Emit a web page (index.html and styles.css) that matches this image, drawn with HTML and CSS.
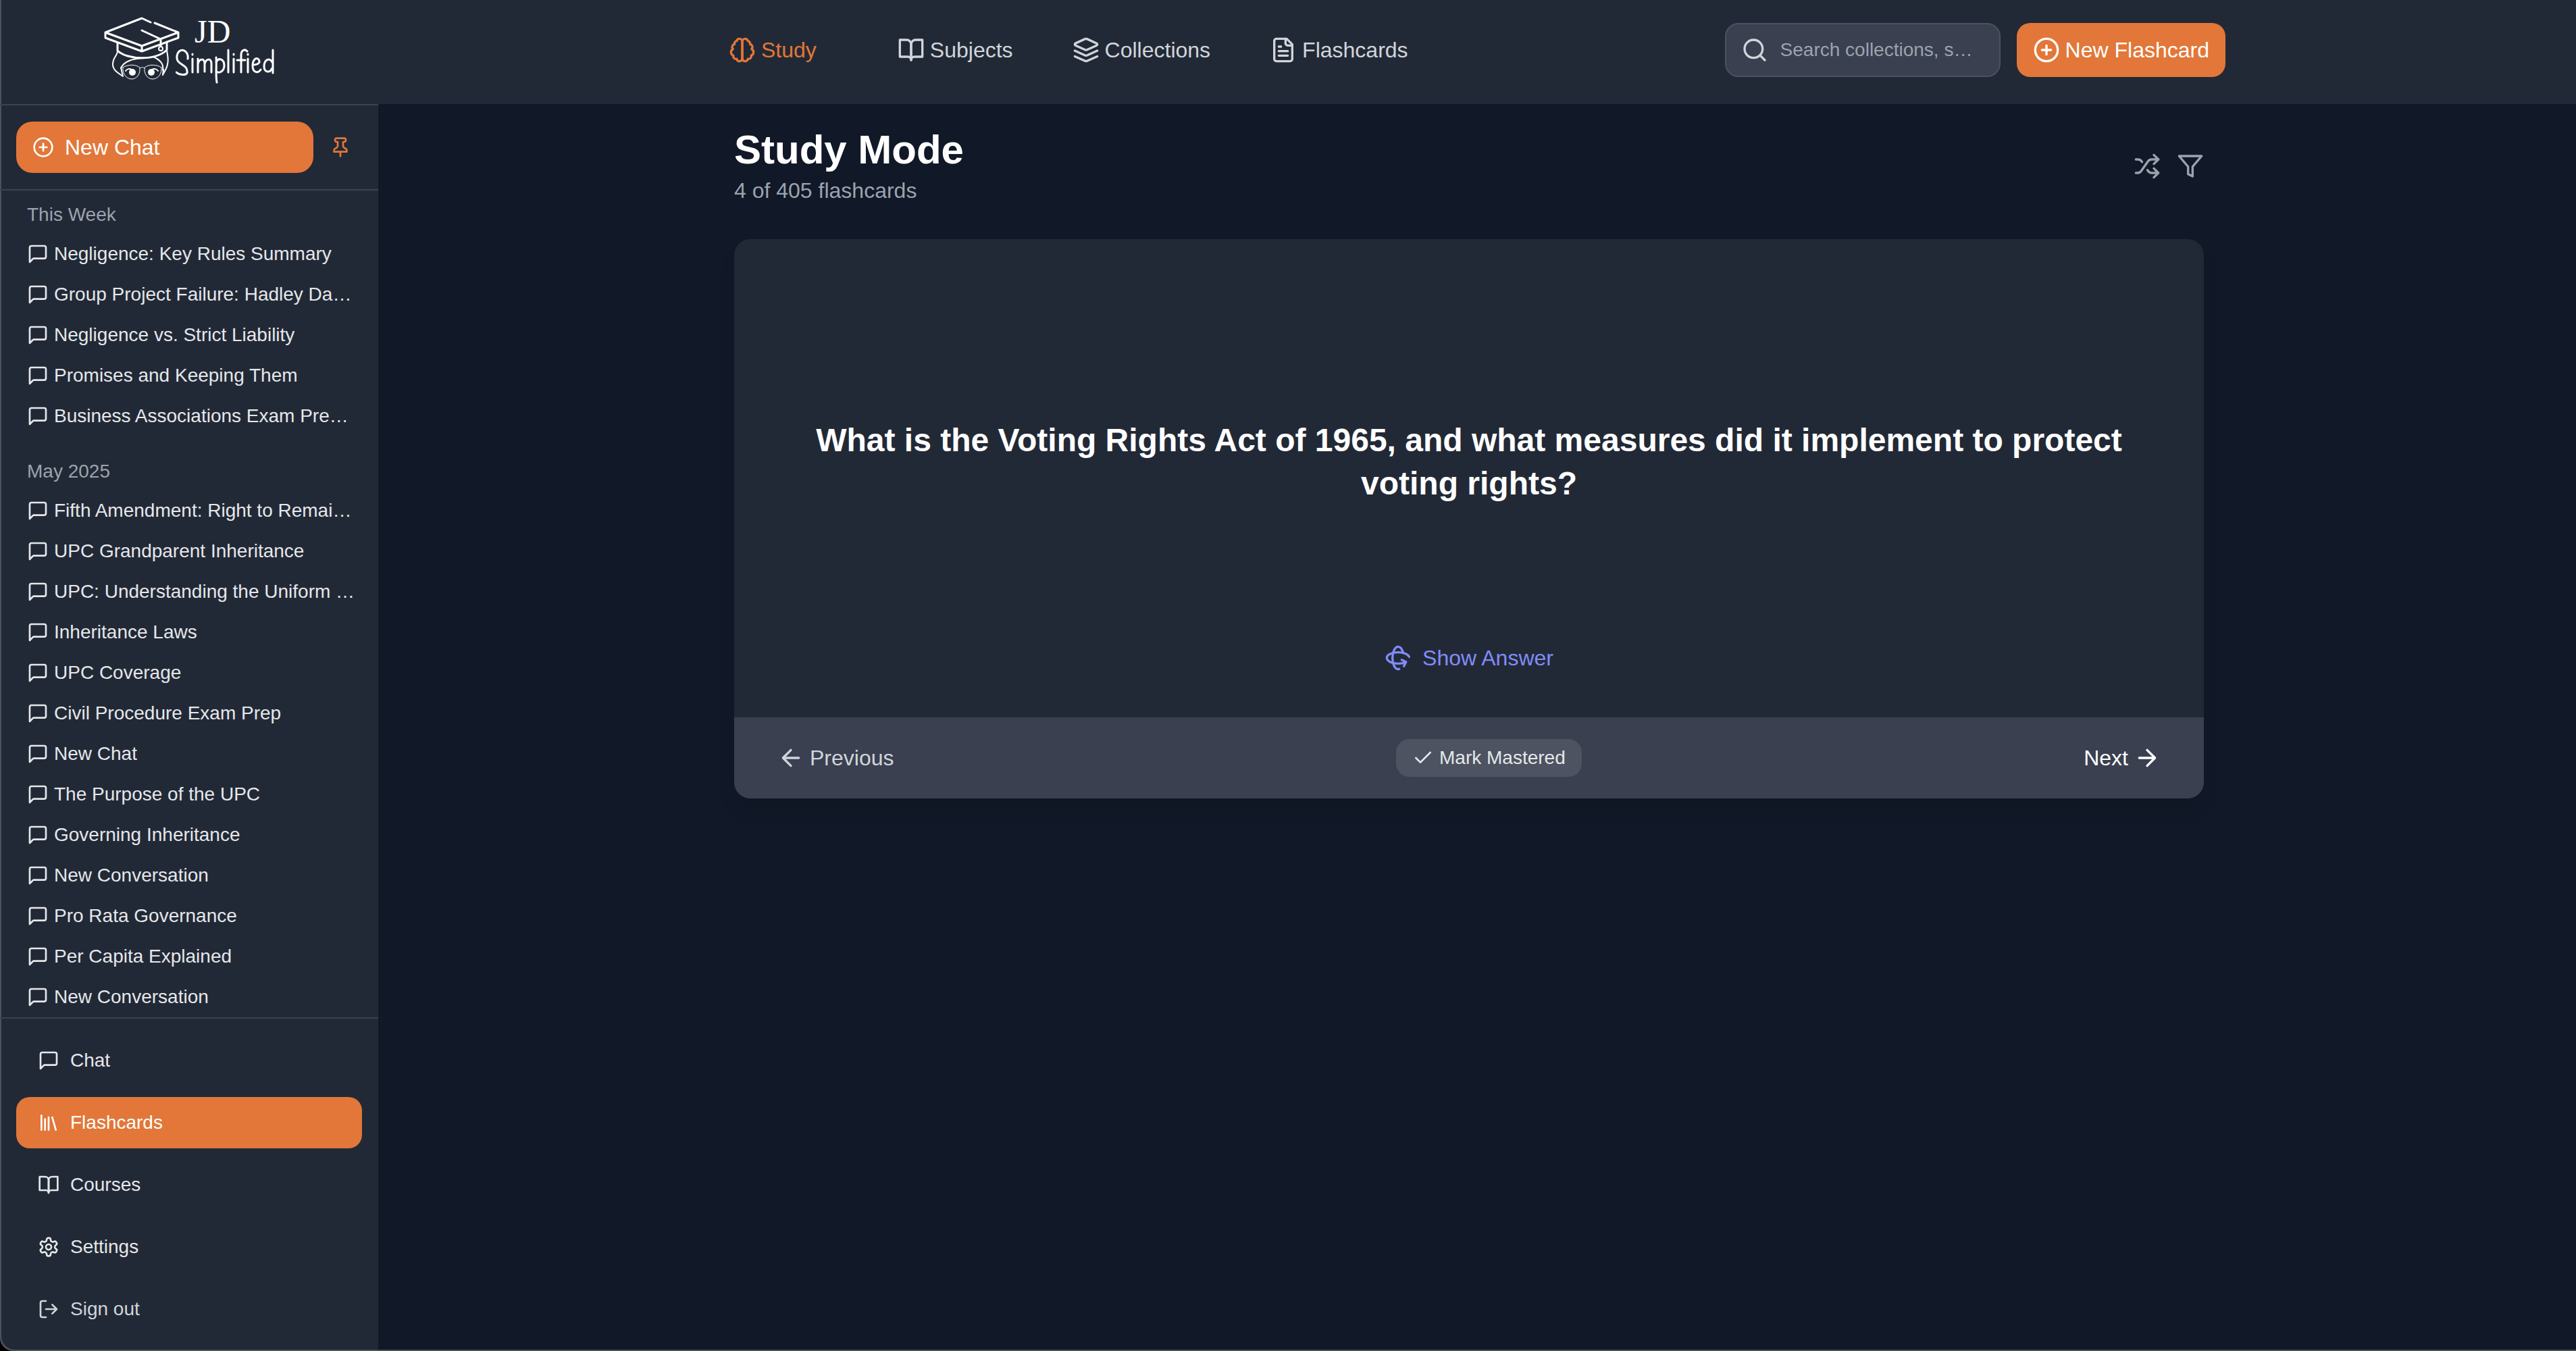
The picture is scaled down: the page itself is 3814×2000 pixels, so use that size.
FILE: index.html
```html
<!DOCTYPE html>
<html lang="en">
<head>
<meta charset="utf-8">
<title>JD Simplified – Study Mode</title>
<link rel="stylesheet" href="styles.css">
</head>
<body>
<svg class="sprite" aria-hidden="true">
  <symbol id="i-plus" viewBox="0 0 24 24"><circle cx="12" cy="12" r="10"/><path d="M8 12h8M12 8v8"/></symbol>
  <symbol id="i-pin" viewBox="0 0 24 24"><path d="M12 17v5"/><path d="M5 17h14v-1.76a2 2 0 0 0-1.11-1.79l-1.78-.9A2 2 0 0 1 15 10.76V6h1a2 2 0 0 0 0-4H8a2 2 0 0 0 0 4h1v4.76a2 2 0 0 1-1.11 1.79l-1.78.9A2 2 0 0 0 5 15.24Z"/></symbol>
  <symbol id="i-msg" viewBox="0 0 24 24"><path d="M21 15a2 2 0 0 1-2 2H7l-4 4V5a2 2 0 0 1 2-2h14a2 2 0 0 1 2 2z"/></symbol>
  <symbol id="i-library" viewBox="0 0 24 24"><path d="m16 6 4 14M12 6v14M8 8v12M4 4v16"/></symbol>
  <symbol id="i-book" viewBox="0 0 24 24"><path d="M2 3h6a4 4 0 0 1 4 4v14a3 3 0 0 0-3-3H2z"/><path d="M22 3h-6a4 4 0 0 0-4 4v14a3 3 0 0 1 3-3h7z"/></symbol>
  <symbol id="i-settings" viewBox="0 0 24 24"><path d="M12.22 2h-.44a2 2 0 0 0-2 2v.18a2 2 0 0 1-1 1.73l-.43.25a2 2 0 0 1-2 0l-.15-.08a2 2 0 0 0-2.73.73l-.22.38a2 2 0 0 0 .73 2.73l.15.1a2 2 0 0 1 1 1.72v.51a2 2 0 0 1-1 1.74l-.15.09a2 2 0 0 0-.73 2.73l.22.38a2 2 0 0 0 2.73.73l.15-.08a2 2 0 0 1 2 0l.43.25a2 2 0 0 1 1 1.73V20a2 2 0 0 0 2 2h.44a2 2 0 0 0 2-2v-.18a2 2 0 0 1 1-1.73l.43-.25a2 2 0 0 1 2 0l.15.08a2 2 0 0 0 2.73-.73l.22-.39a2 2 0 0 0-.73-2.73l-.15-.08a2 2 0 0 1-1-1.74v-.5a2 2 0 0 1 1-1.74l.15-.09a2 2 0 0 0 .73-2.73l-.22-.38a2 2 0 0 0-2.73-.73l-.15.08a2 2 0 0 1-2 0l-.43-.25a2 2 0 0 1-1-1.73V4a2 2 0 0 0-2-2z"/><circle cx="12" cy="12" r="3"/></symbol>
  <symbol id="i-logout" viewBox="0 0 24 24"><path d="M9 21H5a2 2 0 0 1-2-2V5a2 2 0 0 1 2-2h4"/><path d="m16 17 5-5-5-5M21 12H9"/></symbol>
  <symbol id="i-brain" viewBox="0 0 24 24"><path d="M9.5 2A2.5 2.5 0 0 1 12 4.5v15a2.5 2.5 0 0 1-4.96.44 2.5 2.5 0 0 1-2.96-3.08 3 3 0 0 1-.34-5.58 2.5 2.5 0 0 1 1.32-4.24 2.5 2.5 0 0 1 1.98-3A2.5 2.5 0 0 1 9.5 2Z"/><path d="M14.5 2A2.5 2.5 0 0 0 12 4.5v15a2.5 2.5 0 0 0 4.96.44 2.5 2.5 0 0 0 2.96-3.08 3 3 0 0 0 .34-5.58 2.5 2.5 0 0 0-1.32-4.24 2.5 2.5 0 0 0-1.98-3A2.5 2.5 0 0 0 14.5 2Z"/></symbol>
  <symbol id="i-layers" viewBox="0 0 24 24"><path d="m12.83 2.18a2 2 0 0 0-1.66 0L2.6 6.08a1 1 0 0 0 0 1.83l8.58 3.91a2 2 0 0 0 1.66 0l8.58-3.9a1 1 0 0 0 0-1.83Z"/><path d="m22 17.65-9.17 4.16a2 2 0 0 1-1.66 0L2 17.65"/><path d="m22 12.65-9.17 4.16a2 2 0 0 1-1.66 0L2 12.65"/></symbol>
  <symbol id="i-file" viewBox="0 0 24 24"><path d="M15 2H6a2 2 0 0 0-2 2v16a2 2 0 0 0 2 2h12a2 2 0 0 0 2-2V7Z"/><path d="M14 2v4a2 2 0 0 0 2 2h4M10 9H8M16 13H8M16 17H8"/></symbol>
  <symbol id="i-search" viewBox="0 0 24 24"><circle cx="11" cy="11" r="8"/><path d="m21 21-4.3-4.3"/></symbol>
  <symbol id="i-shuffle" viewBox="0 0 24 24"><path d="M2 18h1.4c1.3 0 2.5-.6 3.3-1.7l6.1-8.6c.7-1.1 2-1.7 3.3-1.7H22"/><path d="m18 2 4 4-4 4M2 6h1.9c1.5 0 2.9.9 3.6 2.2M22 18h-5.9c-1.3 0-2.6-.7-3.3-1.8l-.5-.8M18 14l4 4-4 4"/></symbol>
  <symbol id="i-filter" viewBox="0 0 24 24"><path d="M22 3H2l8 9.46V19l4 2v-8.54L22 3z"/></symbol>
  <symbol id="i-rotate" viewBox="0 0 24 24"><path d="M16.466 7.5C15.643 4.237 13.952 2 12 2 9.239 2 7 6.477 7 12s2.239 10 5 10c.342 0 .677-.069 1-.2"/><path d="m15.194 13.707 3.814 1.86-1.86 3.814"/><path d="M19 15.57c-1.804.885-4.274 1.43-7 1.43-5.523 0-10-2.239-10-5s4.477-5 10-5c4.838 0 8.873 1.718 9.8 4"/></symbol>
  <symbol id="i-left" viewBox="0 0 24 24"><path d="m12 19-7-7 7-7M19 12H5"/></symbol>
  <symbol id="i-right" viewBox="0 0 24 24"><path d="M5 12h14M12 5l7 7-7 7"/></symbol>
  <symbol id="i-check" viewBox="0 0 24 24"><path d="M20 6 9 17l-5-5"/></symbol>
</svg>

<div class="app">
  <aside class="sidebar">
    <a class="logo" href="#" aria-label="JD Simplified">
      <svg class="logo-mark" viewBox="0 0 112 94" aria-hidden="true">
        <path class="cap" d="M69 8 56 2 2 23v8l54 20 54-20v-8L75 9M2 23l54 20 54-20M56 43v8M56 20l28 13v10"/>
        <circle class="thin" cx="84" cy="47" r="3"/>
        <path class="cap" d="M20 38v12c15 14 56 15 73-1V37"/>
        <path class="hair" d="M20 51c0 6-7 9-7 19 0 9 8 13 15 18l-3-13M93 50c1 7 3 13 1 20-1 7-5 11-7 16l1-8M25 76c4-10 18-15 36-15M73 59c8 4 16 9 14 20"/>
        <path class="thin" d="M28 75c7-5 19-5 25 0 1 9-4 17-12 17S27 84 28 75ZM85 75c-7-5-19-5-25 0-1 9 4 17 12 17s14-8 13-17M53 76c2-2 5-2 7 0"/>
        <path class="hair" d="M32 80c2-3 6-4 9-2M71 78c3-2 7-1 9 2"/>
        <circle class="eye" cx="42" cy="82" r="5"/><circle class="eye" cx="70" cy="82" r="5"/>
      </svg>
      <span class="logo-text"><span class="logo-jd">JD</span><svg class="logo-word" viewBox="0 0 146 58" aria-hidden="true"><path d="M18 18c2-14-14-18-16-4s17 11 15 25c-2 4-12 3-16-1M25 18v20M25 11v1M33 38V18M33 26c2-9 10-9 10-1v12M43 26c2-9 10-9 10-1v13M60 16c1 13-1 25 1 37M60 23c4-8 12-4 12 5s-9 13-12 8M78 5v33M86 18v20M86 11v1M97 38V12c0-7 6-9 9-5M91 20h12M107 18v20M107 11v1M114 27c8 0 12-3 9-8-5-5-9 3-9 9 0 11 8 12 12 6M144 5v34M143 23c-4-8-12-3-12 6s8 11 12 3"/></svg></span>
    </a>

    <div class="new-row">
      <button class="new-chat" type="button"><svg class="icon"><use href="#i-plus"/></svg>New Chat</button>
      <button class="pin" type="button" aria-label="Pin sidebar"><svg class="icon"><use href="#i-pin"/></svg></button>
    </div>

    <div class="history">
      <section>
        <h2>This Week</h2>
        <ul>
          <li><a href="#"><svg class="icon"><use href="#i-msg"/></svg><span>Negligence: Key Rules Summary</span></a></li>
          <li><a href="#"><svg class="icon"><use href="#i-msg"/></svg><span>Group Project Failure: Hadley Damages</span></a></li>
          <li><a href="#"><svg class="icon"><use href="#i-msg"/></svg><span>Negligence vs. Strict Liability</span></a></li>
          <li><a href="#"><svg class="icon"><use href="#i-msg"/></svg><span>Promises and Keeping Them</span></a></li>
          <li><a href="#"><svg class="icon"><use href="#i-msg"/></svg><span>Business Associations Exam Preparation</span></a></li>
        </ul>
      </section>
      <section>
        <h2>May 2025</h2>
        <ul>
          <li><a href="#"><svg class="icon"><use href="#i-msg"/></svg><span>Fifth Amendment: Right to Remain Silent</span></a></li>
          <li><a href="#"><svg class="icon"><use href="#i-msg"/></svg><span>UPC Grandparent Inheritance</span></a></li>
          <li><a href="#"><svg class="icon"><use href="#i-msg"/></svg><span>UPC: Understanding the Uniform Probate Code</span></a></li>
          <li><a href="#"><svg class="icon"><use href="#i-msg"/></svg><span>Inheritance Laws</span></a></li>
          <li><a href="#"><svg class="icon"><use href="#i-msg"/></svg><span>UPC Coverage</span></a></li>
          <li><a href="#"><svg class="icon"><use href="#i-msg"/></svg><span>Civil Procedure Exam Prep</span></a></li>
          <li><a href="#"><svg class="icon"><use href="#i-msg"/></svg><span>New Chat</span></a></li>
          <li><a href="#"><svg class="icon"><use href="#i-msg"/></svg><span>The Purpose of the UPC</span></a></li>
          <li><a href="#"><svg class="icon"><use href="#i-msg"/></svg><span>Governing Inheritance</span></a></li>
          <li><a href="#"><svg class="icon"><use href="#i-msg"/></svg><span>New Conversation</span></a></li>
          <li><a href="#"><svg class="icon"><use href="#i-msg"/></svg><span>Pro Rata Governance</span></a></li>
          <li><a href="#"><svg class="icon"><use href="#i-msg"/></svg><span>Per Capita Explained</span></a></li>
          <li><a href="#"><svg class="icon"><use href="#i-msg"/></svg><span>New Conversation</span></a></li>
        </ul>
      </section>
    </div>

    <nav class="side-nav" aria-label="Sections">
      <a href="#"><svg class="icon"><use href="#i-msg"/></svg>Chat</a>
      <a href="#" class="active" aria-current="page"><svg class="icon"><use href="#i-library"/></svg>Flashcards</a>
      <a href="#"><svg class="icon"><use href="#i-book"/></svg>Courses</a>
      <a href="#"><svg class="icon"><use href="#i-settings"/></svg>Settings</a>
      <button type="button"><svg class="icon"><use href="#i-logout"/></svg>Sign out</button>
    </nav>
  </aside>

  <div class="content">
    <header class="topbar">
      <div class="topbar-inner">
        <nav class="tabs" aria-label="Flashcards">
          <a href="#" class="current" aria-current="page"><svg class="icon"><use href="#i-brain"/></svg>Study</a>
          <a href="#"><svg class="icon"><use href="#i-book"/></svg>Subjects</a>
          <a href="#"><svg class="icon"><use href="#i-layers"/></svg>Collections</a>
          <a href="#"><svg class="icon"><use href="#i-file"/></svg>Flashcards</a>
        </nav>
        <div class="actions">
          <label class="search"><svg class="icon"><use href="#i-search"/></svg><input type="text" aria-label="Search" placeholder="Search collections, subjects, flashcards"></label>
          <button class="new-card" type="button"><svg class="icon"><use href="#i-plus"/></svg>New Flashcard</button>
        </div>
      </div>
    </header>

    <main class="study">
      <div class="study-head">
        <div>
          <h1>Study Mode</h1>
          <p>4 of 405 flashcards</p>
        </div>
        <div class="tools">
          <button type="button" aria-label="Shuffle"><svg class="icon"><use href="#i-shuffle"/></svg></button>
          <button type="button" aria-label="Filter"><svg class="icon"><use href="#i-filter"/></svg></button>
        </div>
      </div>
      <article class="card">
        <div class="card-body">
          <div class="question"><h2>What is the Voting Rights Act of 1965, and what measures did it implement to protect voting rights?</h2></div>
          <button class="show" type="button"><svg class="icon"><use href="#i-rotate"/></svg>Show Answer</button>
        </div>
        <footer class="card-foot">
          <button class="prev" type="button"><svg class="icon"><use href="#i-left"/></svg>Previous</button>
          <button class="master" type="button"><svg class="icon"><use href="#i-check"/></svg>Mark Mastered</button>
          <button class="next" type="button">Next<svg class="icon"><use href="#i-right"/></svg></button>
        </footer>
      </article>
    </main>
  </div>
</div>
</body>
</html>
```
FILE: styles.css
```css
:root {
  --bg: #111827;
  --panel: #222936;
  --raised: #3a4050;
  --line: #3c4251;
  --accent: #e27739;
  --muted: #9ca3af;
  --soft: #d1d5db;
  --text: #e5e7eb;
}

* { box-sizing: border-box; }

body {
  margin: 0;
  background: #000;
  color: var(--text);
  font-family: "Liberation Sans", Arial, sans-serif;
  font-size: 32px;
  line-height: 48px;
}

h1, h2, p, ul { margin: 0; padding: 0; }
ul { list-style: none; }
a { color: inherit; text-decoration: none; }
button {
  margin: 0;
  padding: 0;
  border: 0;
  background: none;
  color: inherit;
  font: inherit;
  cursor: pointer;
}

.sprite { display: block; width: 0; height: 0; }

.icon {
  flex: none;
  width: 40px;
  height: 40px;
  fill: none;
  stroke: currentColor;
  stroke-width: 2;
  stroke-linecap: round;
  stroke-linejoin: round;
}
.sidebar .icon, .master .icon { width: 32px; height: 32px; }

.app {
  display: flex;
  height: 100vh;
  overflow: hidden;
  background: var(--bg);
  border-bottom-left-radius: 20px;
  box-shadow: inset 2px -2px 0 #4b5059;
}

/* Sidebar */
.sidebar {
  display: flex;
  flex-direction: column;
  flex: none;
  width: 560px;
  background: var(--panel);
  box-shadow: inset 2px -2px 0 #4b5059;
  border-bottom-left-radius: 20px;
  font-size: 28px;
  line-height: 40px;
}

.logo {
  display: flex;
  flex: none;
  align-items: flex-start;
  justify-content: center;
  height: 156px;
  padding-top: 25px;
  border-bottom: 2px solid var(--line);
  color: #fff;
}
.logo-mark { flex: none; width: 112px; height: 94px; }
.logo-mark, .logo-word { fill: none; stroke: #fff; stroke-linecap: round; stroke-linejoin: round; }
.cap { stroke-width: 3; }
.hair { stroke-width: 2; }
.thin { stroke-width: 1; }
circle.thin { stroke-width: 2; }
.eye { fill: #fff; stroke: none; }
.logo-text { display: flex; flex-direction: column; width: 146px; margin-left: -6px; }
.logo-jd {
  padding-left: 28px;
  font-family: "Liberation Serif", "Times New Roman", serif;
  font-size: 48px;
  line-height: 44px;
}
.logo-word { width: 146px; height: 58px; stroke-width: 3; }

.new-row {
  display: flex;
  flex: none;
  align-items: center;
  gap: 24px;
  padding: 24px;
  border-bottom: 2px solid var(--line);
}
.new-chat {
  display: flex;
  align-items: center;
  gap: 16px;
  width: 440px;
  height: 76px;
  padding: 0 24px;
  border-radius: 24px;
  background: var(--accent);
  color: #fff;
  font-size: 32px;
}
.pin { display: flex; color: var(--accent); }

.history {
  display: flex;
  flex: 1;
  flex-direction: column;
  gap: 32px;
  min-height: 0;
  padding: 16px 32px 0 40px;
  overflow: hidden;
}
.history h2 {
  margin-bottom: 8px;
  color: var(--muted);
  font-size: 28px;
  font-weight: 400;
}
.history a { display: flex; align-items: center; gap: 8px; height: 60px; }
.history span { overflow: hidden; text-overflow: ellipsis; white-space: nowrap; }

.side-nav {
  display: flex;
  flex: none;
  flex-direction: column;
  gap: 16px;
  padding: 24px;
  border-top: 2px solid var(--line);
}
.side-nav > * {
  display: flex;
  align-items: center;
  gap: 16px;
  height: 76px;
  padding: 0 32px;
  border-radius: 20px;
}
.side-nav .active { background: var(--accent); color: #fff; }
.side-nav button { color: var(--soft); }

/* Header */
.content { flex: 1; min-width: 0; }
.topbar { padding: 34px 24px 40px 0; background: var(--panel); }
.topbar-inner {
  display: flex;
  align-items: center;
  justify-content: space-between;
  max-width: 2304px;
  margin: 0 auto;
  padding: 0 32px;
}
.tabs { display: flex; gap: 40px; color: var(--soft); }
.tabs a { display: flex; align-items: center; gap: 8px; padding: 0 24px; }
.tabs .current { margin-right: 32px; color: var(--accent); }
.actions { display: flex; gap: 24px; }
.search {
  display: flex;
  align-items: center;
  gap: 18px;
  width: 408px;
  height: 80px;
  padding: 0 32px 0 22px;
  border: 2px solid #4b5160;
  border-radius: 20px;
  background: var(--raised);
  color: var(--soft);
}
.search input {
  flex: 1;
  min-width: 0;
  padding: 0;
  border: 0;
  outline: 0;
  background: none;
  color: var(--text);
  font: inherit;
  font-size: 28px;
  text-overflow: ellipsis;
}
.search input::placeholder { color: var(--muted); opacity: 1; }
.new-card {
  display: flex;
  align-items: center;
  gap: 8px;
  height: 80px;
  padding: 0 24px;
  border-radius: 20px;
  background: var(--accent);
  color: #fff;
}

/* Study */
.study { padding: 32px 24px 32px 0; }
.study-head, .card { max-width: 2176px; margin: 0 auto; }
.study-head {
  display: flex;
  align-items: center;
  justify-content: space-between;
  margin-bottom: 48px;
}
h1 { color: #fff; font-size: 60px; line-height: 72px; }
.study-head p { color: var(--muted); }
.tools { display: flex; gap: 24px; color: var(--muted); }
.tools button { display: flex; }

.card {
  overflow: hidden;
  border-radius: 24px;
  background: var(--panel);
  box-shadow: 0 20px 30px -6px rgba(0, 0, 0, .1);
}
.card-body {
  display: flex;
  flex-direction: column;
  align-items: center;
  padding: 64px;
}
.question {
  display: flex;
  align-items: center;
  min-height: 532px;
  color: #fff;
  text-align: center;
}
.question h2 { font-size: 48px; line-height: 64px; }
.show { display: flex; align-items: center; gap: 16px; color: #818cf8; }
.card-foot {
  display: flex;
  align-items: center;
  justify-content: space-between;
  height: 120px;
  padding: 0 64px;
  background: var(--raised);
}
.card-foot button { display: flex; align-items: center; gap: 8px; }
.prev { color: var(--soft); }
.next { color: #fff; }
.card-foot .master {
  height: 56px;
  padding: 0 24px;
  border-radius: 20px;
  background: #4d5361;
  color: var(--text);
  font-size: 28px;
}
```
